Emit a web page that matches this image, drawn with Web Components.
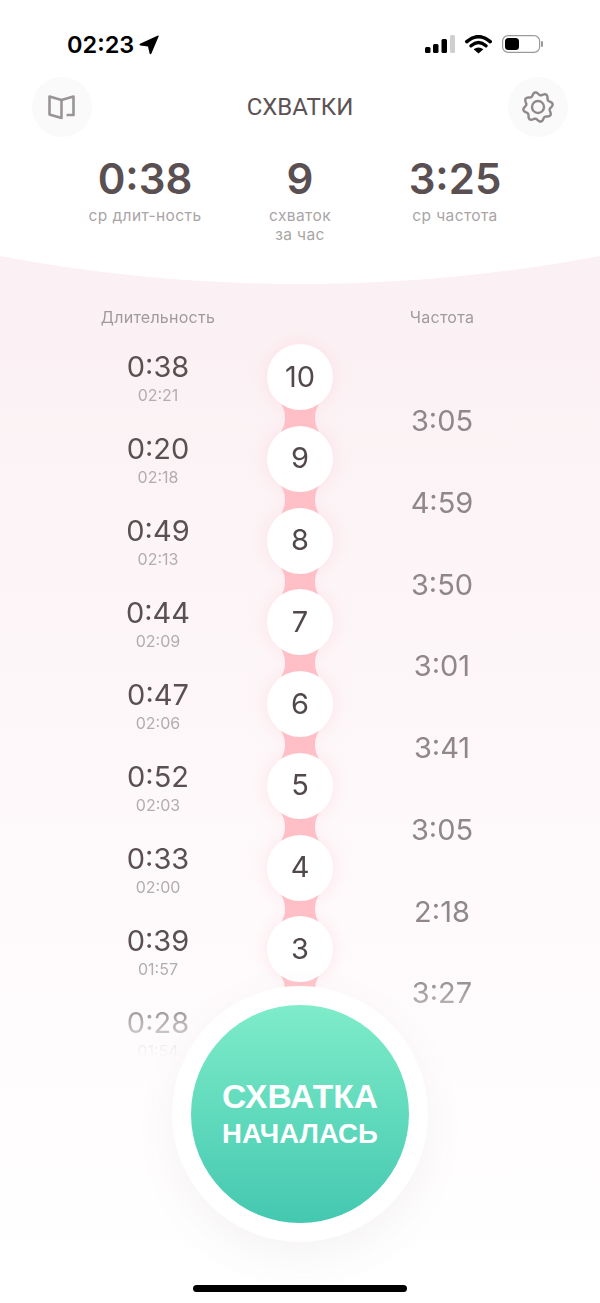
<!DOCTYPE html>
<html lang="ru">
<head>
<meta charset="utf-8">
<title>Схватки</title>
<style>
    html, body { margin: 0; padding: 0; }
    body {
        width: 600px;
        height: 1303px;
        overflow: hidden;
        font-family: "Inter", "Liberation Sans", sans-serif;
        background: linear-gradient(#fbf0f3 0, #fbf0f3 256px, #fffdfe 1120px, #ffffff 1303px);
    }
</style>
</head>
<body>
<contraction-app></contraction-app>
<script>
class StatusBar extends HTMLElement {
    constructor() {
        super();
        const shadowRoot = this.attachShadow({ mode: 'open' });
        shadowRoot.innerHTML = `
        <style>
            :host {
                display: flex;
                align-items: center;
                justify-content: space-between;
                height: 77px;
                padding: 12px 56px 0 67px;
                box-sizing: border-box;
                color: #000;
            }
            #time {
                display: flex;
                align-items: center;
                gap: 5px;
                font: 600 23.5px/30px "Inter", sans-serif;
            }
            svg { display: block; }
        </style>
        <div id="time">
            <span>02:23</span>
            <svg width="20" height="20" viewBox="0 0 20 20"><path d="M19 .6 Q20 .4 19.6 1.6 L12.4 18.6 Q11.4 20 10.6 18.6 L9 11.4 L1.4 10.6 Q-.2 9.8 1 8.8 Z" fill="#000"/></svg>
        </div>
        <svg width="119" height="20" viewBox="0 0 119 20">
            <rect x="0" y="12" width="5.5" height="6" rx="1.5" fill="#000"/>
            <rect x="8" y="9" width="5.5" height="9" rx="1.5" fill="#000"/>
            <rect x="16.5" y="4" width="5.5" height="14" rx="1.5" fill="#000"/>
            <rect x="25" y="0" width="5" height="18" rx="1.5" fill="#cfcfcf"/>
            <path d="M41.8 6.6 Q53.5 -3.2 65.2 6.6" fill="none" stroke="#000" stroke-width="3.6" stroke-linecap="round"/>
            <path d="M46 10.8 Q53.5 4.4 61 10.8" fill="none" stroke="#000" stroke-width="3.4" stroke-linecap="round"/>
            <path d="M48.6 14.2 Q53.5 10.6 58.4 14.2 L53.5 18.6 Z" fill="#000"/>
            <rect x="77.6" y=".6" width="37" height="16.8" rx="5.5" fill="#fff" stroke="#9a9a9a" stroke-width="1.2"/>
            <rect x="80" y="3" width="14" height="12" rx="3.5" fill="#000"/>
            <rect x="116" y="6" width="2" height="6" rx="1" fill="#9a9a9a"/>
        </svg>
        `;
    }
}

class RoundIcon extends HTMLElement {
    constructor() {
        super();
        const shadowRoot = this.attachShadow({ mode: 'open' });
        shadowRoot.innerHTML = `
        <style>
            :host {
                display: flex;
                align-items: center;
                justify-content: center;
                width: 60px;
                height: 60px;
                border-radius: 50%;
                background: #fafafb;
            }
        </style>
        <slot></slot>
        `;
    }
}

// scalloped outline for the settings gear
function gearPoints() {
    const pts = [];
    for (let i = 0; i < 96; i++) {
        const a = i / 96 * Math.PI * 2;
        const r = 13.4 + 1.5 * Math.cos(a * 8 + Math.PI / 8 * 4);
        pts.push((16 + r * Math.cos(a)).toFixed(2) + ',' + (16 + r * Math.sin(a)).toFixed(2));
    }
    return pts.join(' ');
}

class NavHeader extends HTMLElement {
    constructor() {
        super();
        const shadowRoot = this.attachShadow({ mode: 'open' });
        shadowRoot.innerHTML = `
        <style>
            :host {
                display: flex;
                align-items: center;
                justify-content: space-between;
                padding: 0 31.5px;
                height: 60px;
            }
            #title {
                font: 400 24px/60px "Roboto", sans-serif;
                color: #5c5355;
            }
            svg { display: block; }
        </style>
        <round-icon>
            <svg width="27" height="25" viewBox="0 0 27 25" fill="none" stroke="#9a9496" stroke-width="2.6" stroke-linejoin="round">
                <path d="M1.5 1.5 L13.5 5 V23 L1.5 19.5 Z"/>
                <path d="M13.5 5 L25.5 1.5 V20 L18.5 20"/>
            </svg>
        </round-icon>
        <span id="title">СХВАТКИ</span>
        <round-icon>
            <svg width="32" height="32" viewBox="0 0 32 32" fill="none" stroke="#8f898b" stroke-width="2.4" stroke-linejoin="round">
                <polygon points="${gearPoints()}"/>
                <circle cx="16" cy="16" r="6"/>
            </svg>
        </round-icon>
        `;
    }
}

class StatItem extends HTMLElement {
    constructor() {
        super();
        const shadowRoot = this.attachShadow({ mode: 'open' });
        shadowRoot.innerHTML = `
        <style>
            :host {
                display: flex;
                flex-direction: column;
                align-items: center;
                text-align: center;
            }
            #value {
                font: 600 42px/52px "Inter", sans-serif;
                color: #5a5052;
            }
            #label {
                margin-top: 1px;
                font: 400 15.5px/19px "Inter", sans-serif;
                letter-spacing: .4px;
                color: #aaa4a6;
            }
        </style>
        <div id="value"></div>
        <div id="label"><slot></slot></div>
        `;
        shadowRoot.querySelector('#value').textContent = this.getAttribute('value');
    }
}

class SummaryHead extends HTMLElement {
    constructor() {
        super();
        const shadowRoot = this.attachShadow({ mode: 'open' });
        shadowRoot.innerHTML = `
        <style>
            :host {
                display: block;
                height: 284px;
                background: #fff;
                clip-path: circle(1621px at 50% -1337px);
            }
            #stats {
                display: grid;
                grid-template-columns: repeat(3, 155px);
                justify-content: center;
                padding-top: 16px;
            }
        </style>
        <status-bar></status-bar>
        <nav-header></nav-header>
        <div id="stats">
            <stat-item value="0:38">ср длит-ность</stat-item>
            <stat-item value="9">схваток<br>за час</stat-item>
            <stat-item value="3:25">ср частота</stat-item>
        </div>
        `;
    }
}

class DurationCell extends HTMLElement {
    constructor() {
        super();
        const shadowRoot = this.attachShadow({ mode: 'open' });
        shadowRoot.innerHTML = `
        <style>
            :host {
                display: flex;
                flex-direction: column;
                align-items: center;
                height: 82px;
            }
            #len { font: 400 29px/36px "Inter", sans-serif; color: #5a5052; }
            #at { font: 400 16px/20px "Inter", sans-serif; color: #b3adaf; }
        </style>
        <div id="len"></div>
        <div id="at"></div>
        `;
        shadowRoot.querySelector('#len').textContent = this.getAttribute('len');
        shadowRoot.querySelector('#at').textContent = this.getAttribute('at');
    }
}

class CountBubble extends HTMLElement {
    constructor() {
        super();
        const shadowRoot = this.attachShadow({ mode: 'open' });
        shadowRoot.innerHTML = `
        <style>
            :host {
                display: block;
                position: relative;
                height: 81.75px;
            }
            #dot {
                position: relative;
                box-sizing: border-box;
                width: 66px;
                height: 66px;
                margin: 0 auto;
                padding-bottom: 2px;
                border-radius: 50%;
                background: #fff;
                box-shadow: 0 0 18px rgba(255, 190, 198, .35);
                display: flex;
                align-items: center;
                justify-content: center;
                font: 400 29px/1 "Inter", sans-serif;
                color: #514849;
            }
            svg {
                position: absolute;
                left: 50%;
                top: 56px;
                margin-left: -24px;
                display: block;
            }
        </style>
        <svg width="48" height="36" viewBox="0 0 48 36"><path d="M4 2 H44 Q34.5 17 43 32 H5 Q13.5 17 4 2 Z" fill="#ffc0c7"/></svg>
        <div id="dot"><slot></slot></div>
        `;
    }
}

class ContractionTimeline extends HTMLElement {
    constructor() {
        super();
        const shadowRoot = this.attachShadow({ mode: 'open' });
        const rows = [
            ['0:38', '02:21', '3:05'],
            ['0:20', '02:18', '4:59'],
            ['0:49', '02:13', '3:50'],
            ['0:44', '02:09', '3:01'],
            ['0:47', '02:06', '3:41'],
            ['0:52', '02:03', '3:05'],
            ['0:33', '02:00', '2:18'],
            ['0:39', '01:57', '3:27'],
            ['0:28', '01:54', '']
        ];
        shadowRoot.innerHTML = `
        <style>
            :host {
                display: grid;
                grid-template-columns: repeat(3, 142px);
                justify-content: center;
                padding-top: 23px;
                -webkit-mask-image: linear-gradient(#000 0, #000 690px, transparent 776px);
                mask-image: linear-gradient(#000 0, #000 690px, transparent 776px);
            }
            .title {
                font: 400 16px/20px "Inter", sans-serif;
                letter-spacing: .25px;
                color: #a09a9c;
                text-align: center;
                margin-bottom: 17px;
            }
            .freq {
                height: 81.75px;
                font: 400 29px/36px "Inter", sans-serif;
                color: #8f8789;
                text-align: center;
            }
            #durs { padding-top: 5px; }
            #freqs { padding-top: 59px; }
        </style>
        <div>
            <div class="title">Длительность</div>
            <div id="durs">
                ${rows.map((r) => `<duration-cell len="${r[0]}" at="${r[1]}"></duration-cell>`).join('')}
            </div>
        </div>
        <div>
            <div class="title">&nbsp;</div>
            ${rows.map((r, i) => `<count-bubble>${10 - i}</count-bubble>`).join('')}
        </div>
        <div>
            <div class="title">Частота</div>
            <div id="freqs">
                ${rows.map((r) => `<div class="freq">${r[2]}</div>`).join('')}
            </div>
        </div>
        `;
    }
}

class StartButton extends HTMLElement {
    constructor() {
        super();
        const shadowRoot = this.attachShadow({ mode: 'open' });
        shadowRoot.innerHTML = `
        <style>
            :host {
                position: absolute;
                left: 172px;
                top: 986px;
                width: 256px;
                height: 256px;
                box-sizing: border-box;
                padding: 19px;
                border-radius: 50%;
                background: #fff;
                box-shadow: 0 14px 40px rgba(120, 100, 110, .07);
            }
            #face {
                width: 100%;
                height: 100%;
                border-radius: 50%;
                background: linear-gradient(#7eecc9, #44c8b0);
                color: #fff;
                display: flex;
                flex-direction: column;
                align-items: center;
                justify-content: center;
                font-family: "Liberation Sans", Arial, sans-serif;
                font-weight: 700;
            }
            #a { font-size: 33.6px; line-height: 38px; }
            #b { font-size: 27.6px; line-height: 35px; }
        </style>
        <div id="face">
            <div id="a">СХВАТКА</div>
            <div id="b">НАЧАЛАСЬ</div>
        </div>
        `;
    }
}

class HomeIndicator extends HTMLElement {
    constructor() {
        super();
        const shadowRoot = this.attachShadow({ mode: 'open' });
        shadowRoot.innerHTML = `
        <style>
            :host {
                position: absolute;
                left: 193px;
                top: 1285px;
                width: 214px;
                height: 7px;
                border-radius: 4px;
                background: #000;
            }
        </style>
        `;
    }
}

class ContractionApp extends HTMLElement {
    constructor() {
        super();
        const shadowRoot = this.attachShadow({ mode: 'open' });
        shadowRoot.innerHTML = `
        <style>
            :host {
                display: block;
                position: relative;
                width: 600px;
                height: 1303px;
                overflow: hidden;
            }
        </style>
        <summary-head></summary-head>
        <contraction-timeline></contraction-timeline>
        <start-button></start-button>
        <home-indicator></home-indicator>
        `;
    }
}

customElements.define('status-bar', StatusBar);
customElements.define('round-icon', RoundIcon);
customElements.define('nav-header', NavHeader);
customElements.define('stat-item', StatItem);
customElements.define('summary-head', SummaryHead);
customElements.define('duration-cell', DurationCell);
customElements.define('count-bubble', CountBubble);
customElements.define('contraction-timeline', ContractionTimeline);
customElements.define('start-button', StartButton);
customElements.define('home-indicator', HomeIndicator);
customElements.define('contraction-app', ContractionApp);
</script>
</body>
</html>
